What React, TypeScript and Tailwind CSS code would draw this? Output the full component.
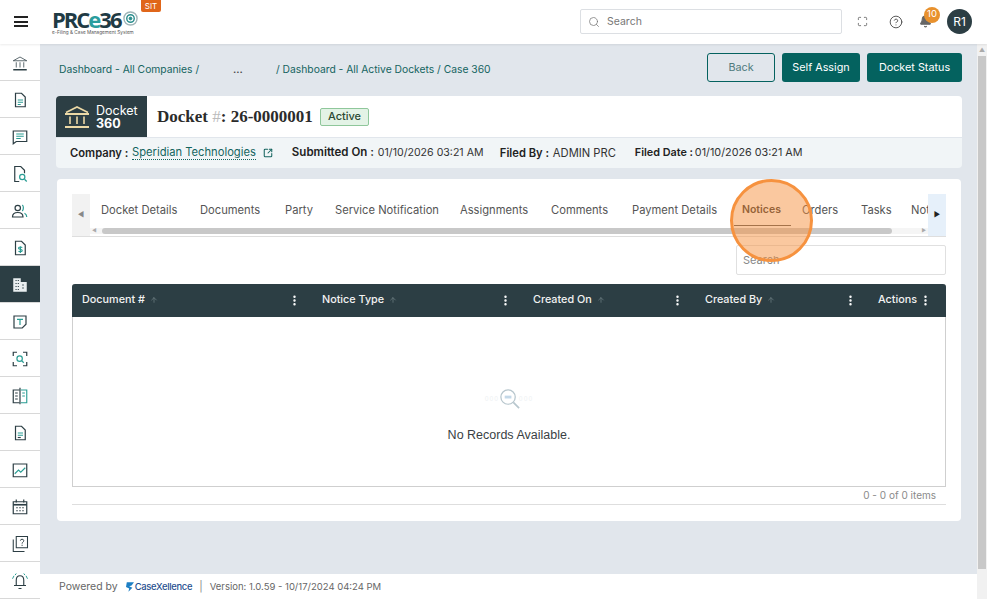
import { Search, Maximize, CircleHelp, Bell, ArrowUp, SquareArrowOutUpRight, EllipsisVertical } from "lucide-react";

const dark = "#2c3e44";
const teal = "#2a9d94";

const sideIcons = [
  <g key="0"><path d="M3 9 12 4l9 5H3Z" stroke={dark} /><path d="M7 11v7M12 11v7M17 11v7" stroke={dark} /><path d="M3 21h18" stroke={dark} strokeWidth="2" /></g>,
  <g key="1"><path d="M6 3h8l5 5v13H6V3Z" stroke={dark} strokeWidth="1.6" /><path d="M9 12h7M9 15h7M9 18h4" stroke={teal} strokeWidth="1.5" /></g>,
  <g key="2"><path d="M3 4h18v14H7l-4 3V4Z" stroke={dark} strokeWidth="1.6" /><path d="M7 8h10M7 11h10M7 14h6" stroke={teal} strokeWidth="1.5" /></g>,
  <g key="3"><path d="M11 22H5V2h8l5 5v4" stroke={dark} strokeWidth="1.6" /><circle cx="15" cy="16" r="3.5" stroke={teal} strokeWidth="1.6" /><path d="m18 19 3 3" stroke={teal} strokeWidth="1.6" /></g>,
  <g key="4"><circle cx="9" cy="8" r="3.6" stroke={dark} strokeWidth="1.6" /><path d="M2 20c0-4 3-6 7-6s7 2 7 6H2Z" stroke={dark} strokeWidth="1.6" /><path d="M15 4c2 1 2 6 0 8M18 15c2 1 3 3 3 5" stroke={teal} strokeWidth="1.6" /></g>,
  <g key="5"><path d="M6 3h8l5 5v13H6V3Z" stroke={dark} strokeWidth="1.6" /><path d="M15 11.5c-1-1.2-5-1.2-5 .8s5 1 5 3-4 2-5 .8M12.5 9.5v9" stroke={teal} strokeWidth="1.5" /></g>,
  <g key="6"><path d="M3 3h10v5h8v13H3V3Z" fill="#e9eef0" /><path d="M6 6h1.500M9 6h1.500M6 10h1.500M9 10h1.500M6 14h1.500M9 14h1.500M6 18h1.500M9 18h1.500M15 12h2M15 16h2" stroke={dark} strokeWidth="1.4" /></g>,
  <g key="7"><path d="M4 4h16v11l-5 5H4V4Z" stroke={dark} strokeWidth="1.6" /><path d="M8 8.500h8M12 8.500V16" stroke={teal} strokeWidth="1.6" /></g>,
  <g key="8"><path d="M3 8V3h5M16 3h5v5M21 16v5h-5M8 21H3v-5" stroke={dark} strokeWidth="1.6" /><circle cx="11.500" cy="11.500" r="3.600" stroke={teal} strokeWidth="1.6" /><path d="m14.500 14.500 2.500 2.500" stroke={teal} strokeWidth="1.6" /></g>,
  <g key="9"><path d="M11 4H3v17h8M12 1v22" stroke={dark} strokeWidth="1.6" /><path d="M13 4h8v17h-8" stroke={teal} strokeWidth="1.5" /><path d="M5.500 8H9M5.500 12H9M5.500 16H9" stroke={dark} strokeWidth="1.4" /><path d="M15 8h3.500M15 12h3.500" stroke={teal} strokeWidth="1.4" /></g>,
  <g key="10"><path d="M6 3h8l5 5v13H6V3Z" stroke={dark} strokeWidth="1.6" /><path d="M9 12h7M9 15h7" stroke={teal} strokeWidth="1.5" /><path d="M9 18h4" stroke={dark} strokeWidth="1.5" /></g>,
  <g key="11"><path d="M3 4h18v17H3V4Z" stroke={dark} strokeWidth="1.6" /><path d="m5 17 5-5 3 3 6-6" stroke={teal} strokeWidth="1.5" /></g>,
  <g key="12"><path d="M3 5h18v16H3V5Z" stroke={dark} strokeWidth="1.6" /><path d="M3 9h18" stroke={dark} strokeWidth="2.200" /><path d="M7 2v4M17 2v4" stroke={dark} strokeWidth="1.6" /><path d="M7 13h2M11 13h2M15 13h2M7 17h2M11 17h2M15 17h2" stroke={dark} strokeWidth="1.5" /></g>,
  <g key="13"><path d="M7 2h15v15H7V2Z" stroke={dark} strokeWidth="1.4" /><path d="M3 6v16h15" stroke={dark} strokeWidth="1.4" /><path d="M12.500 7.500c0-2.500 4.500-2.500 4.500 0 0 2-2.200 2-2.200 4M14.800 13v1.500" stroke={dark} strokeWidth="1.3" /></g>,
  <g key="14"><path d="M12 5c-3 0-5 2-5 6v7h10v-7c0-4-2-6-5-6Z" stroke={dark} strokeWidth="1.5" /><path d="M4 18h16M10 22h4" stroke={dark} strokeWidth="1.5" /><path d="M4 5 2 9M20 5l2 4M7 2 5.500 4M17 2l1.500 2" stroke={teal} strokeWidth="1.3" /></g>,
];

const tabs = [
  { label: "Docket Details", w: "w-[77px]" },
  { label: "Documents", w: "w-[63px]" },
  { label: "Party", w: "w-[28px]" },
  { label: "Service Notification", w: "w-[103px]" },
  { label: "Assignments", w: "w-[69px]" },
  { label: "Comments", w: "w-[59px]" },
  { label: "Payment Details", w: "w-[88px]" },
  { label: "Notices", w: "w-[38px]" },
  { label: "Orders", w: "w-[37px]" },
  { label: "Tasks", w: "w-[28px]" },
  { label: "Notes", w: "w-[17px] overflow-hidden" },
];

const columns = [
  { label: "Document #", w: "w-[240px]", sort: true },
  { label: "Notice Type", w: "w-[211px]", sort: true },
  { label: "Created On", w: "w-[172px]", sort: true },
  { label: "Created By", w: "w-[173px]", sort: true },
  { label: "Actions", w: "flex-1", sort: false },
];

function Landmark() {
  return (
    <svg viewBox="0 0 26 24" className="h-[24px] w-[26px]" fill="none" stroke="#ecd9a6">
      <path d="M2 7.500 13 2l11 5.500" strokeWidth="1.600" />
      <path d="M1 9h24" strokeWidth="1.800" />
      <path d="M6 11.500v7.500M13 11.500v7.500M20 11.500v7.500" strokeWidth="1.600" />
      <path d="M1 22h24" strokeWidth="1.800" />
    </svg>
  );
}

export default function App() {
  return (
    <div className="relative flex h-[599px] w-[987px] flex-col overflow-hidden bg-[#e1e6ec] font-['Inter',sans-serif] text-[11px] text-[#333]">
      {/* top bar */}
      <header className="z-10 flex h-[44px] shrink-0 items-center bg-white pb-[1px] shadow-[0_1px_2px_rgba(0,0,0,0.08)]">
        <div className="flex w-[41px] justify-center">
          <div className="flex w-[14px] flex-col gap-[2.500px]">
            <span className="h-[2px] bg-[#222]" />
            <span className="h-[2px] bg-[#222]" />
            <span className="h-[2px] bg-[#222]" />
          </div>
        </div>
        <div className="relative ml-[11px] w-[88px]">
          <div className="flex items-center font-['Open_Sans',sans-serif] text-[22px] leading-[20px] font-bold tracking-[-2px] text-[#1f3b45]">
            PRC<span className="text-[#2a9d9d]">e</span>36
            <svg viewBox="0 0 16 16" className="ml-[2px] h-[15px] w-[15px]" fill="none" stroke="#2a8d8d">
              <circle cx="8" cy="8" r="7" stroke="#9fb5b8" strokeWidth="1.500" />
              <circle cx="8" cy="8" r="4" strokeWidth="1.500" />
              <circle cx="8" cy="8" r="1.500" fill="#2a8d8d" />
            </svg>
          </div>
          <div className="whitespace-nowrap text-[4.700px] leading-[6px] text-[#555]">e-Filing &amp; Case Management System</div>
        </div>
        <div className="mb-[31px] ml-[1px] flex h-[12px] w-[20px] items-center justify-center rounded-b-[2px] bg-[#e0661a] text-[8px] text-white">SIT</div>
        <div className="ml-[419px] flex h-[25px] w-[262px] items-center gap-[5px] rounded-[2px] border border-[#dcdfe3] pl-[7px] text-[10.500px] text-[#777]">
          <Search size={12} strokeWidth={1.5} color="#777" />
          <span className="ml-[2px]">Search</span>
        </div>
        <Maximize size={11} className="ml-[15px]" strokeWidth={1.5} color="#444" />
        <CircleHelp size={14} className="ml-[21px]" strokeWidth={1.5} color="#444" />
        <div className="relative ml-[16px] h-[14px] w-[14px]">
          <Bell size={13} fill="#666" color="#666" />
          <span className="absolute top-[-8px] left-[5px] flex h-[16px] w-[16px] items-center justify-center rounded-full bg-[#e8912d] text-[9.500px] text-white">10</span>
        </div>
        <div className="ml-[14px] flex h-[25px] w-[25px] items-center justify-center rounded-full bg-[#2c3e44] text-[12px] text-white">R1</div>
      </header>

      <div className="flex min-h-0 flex-1">
        {/* icon rail */}
        <nav className="flex w-[40px] shrink-0 flex-col bg-white">
          {sideIcons.map((icon, i) => (
            <div key={i} className={`flex h-[37px] shrink-0 items-center justify-center border-b border-[#d8d8d8] pt-[1px] ${i === 6 ? "bg-[#2c3e44]" : ""}`}>
              <svg viewBox="0 0 24 24" className="h-[18px] w-[18px]" fill="none">{icon}</svg>
            </div>
          ))}
        </nav>

        <div className="flex min-w-0 flex-1 flex-col">
          <main className="min-h-0 flex-1 pr-[15px] pl-[16px]">
            {/* breadcrumb and actions */}
            <div className="flex h-[52px] items-start pt-[9px] text-[10.300px] text-[#14645f]">
              <div className="flex h-[29px] items-center pt-[5px]">
                <span className="ml-[3px] w-[142px] whitespace-nowrap">Dashboard - All Companies /</span>
                <span className="ml-[32px] w-[43px] font-semibold text-[#444]">...</span>
                <span className="whitespace-nowrap">/ Dashboard - All Active Dockets / Case 360</span>
              </div>
              <div className="ml-auto flex gap-[7px] text-[10.800px]">
                <button className="h-[29px] w-[68px] rounded-[3px] border border-[#04625f] pt-[1px] text-[#4f7a7d]">Back</button>
                <button className="h-[29px] w-[78px] rounded-[3px] bg-[#04625f] pt-[1px] text-white">Self Assign</button>
                <button className="h-[29px] w-[95px] rounded-[3px] bg-[#04625f] pt-[1px] text-white">Docket Status</button>
              </div>
            </div>

            {/* docket summary */}
            <section className="overflow-hidden rounded-[4px]">
              <div className="flex h-[41px] items-center bg-white">
                <div className="flex h-full w-[91px] items-center gap-[6px] bg-[#2c3e44] pl-[8px] text-white">
                  <Landmark />
                  <div className="text-[12.500px] leading-[13px]">
                    Docket
                    <div className="font-bold">360</div>
                  </div>
                </div>
                <h1 className="ml-[10px] w-[154px] font-['Liberation_Serif',serif] text-[17px] font-bold whitespace-nowrap text-[#2b2b2b]">
                  Docket <span className="font-normal text-[#bbb]">#</span>: 26-0000001
                </h1>
                <span className="ml-[9px] flex h-[18px] w-[49px] items-center justify-center rounded-[2px] border border-[#8fc79b] bg-[#e3f3e6] pb-[1px] text-[11px] font-medium text-[#2b4a33]">Active</span>
              </div>
              <div className="mt-[1px] flex h-[30px] items-center bg-[#f1f5f7] pl-[14px] whitespace-nowrap">
                <b className="w-[62px] shrink-0 text-[11.200px] font-semibold text-[#222]">Company :</b>
                <span className="border-b border-dotted border-[#14645f] text-[11.200px] leading-[13px] text-[#14645f]">Speridian Technologies</span>
                <SquareArrowOutUpRight size={10} strokeWidth={2.500} color="#14645f" className="ml-[7px] shrink-0" />
                <b className="ml-[19px] w-[86px] shrink-0 text-[11.500px] font-semibold text-[#222]">Submitted On :</b>
                <span className="w-[122px] shrink-0 text-[10.600px]">01/10/2026 03:21 AM</span>
                <b className="w-[53px] shrink-0 text-[11.200px] font-semibold text-[#222]">Filed By :</b>
                <span className="w-[82px] shrink-0 text-[11.200px]">ADMIN PRC</span>
                <b className="w-[60px] shrink-0 text-[10.800px] font-semibold text-[#222]">Filed Date :</b>
                <span className="text-[10.800px]">01/10/2026 03:21 AM</span>
              </div>
            </section>

            {/* tabs card */}
            <section className="mt-[11px] mr-[1px] ml-[1px] h-[342px] rounded-[4px] bg-white px-[15px] pt-[15px]">
              <div className="relative h-[43px] overflow-hidden border-b border-[#dedede]">
                <div className="flex h-[33px] items-center pl-[29px] text-[11.200px] whitespace-nowrap text-[#555]">
                  <div className="flex gap-[22px]">
                    {tabs.map((t) => (
                      <span key={t.label} className={`${t.w} shrink-0 ${t.label === "Notices" ? "text-[10.500px] font-semibold text-[#333]" : ""}`}>{t.label}</span>
                    ))}
                  </div>
                </div>
                <div className="absolute top-0 left-0 flex h-[42px] w-[18px] items-center justify-center bg-[#f2f2f2] text-[7px] text-[#888]">◀</div>
                <div className="absolute top-0 right-0 flex h-[42px] w-[18px] items-center justify-center bg-[#e6f0fa] text-[7px] text-[#222]">▶</div>
                <div className="absolute right-[18px] bottom-[2px] left-[18px] flex h-[6px] items-center bg-[#f5f5f5]">
                  <span className="ml-[2px] text-[5px] text-[#aaa]">◀</span>
                  <span className="ml-[5px] h-[6px] w-[790px] rounded-full bg-[#c8c8c8]" />
                  <span className="ml-auto mr-[2px] text-[5px] text-[#aaa]">▶</span>
                </div>
                <span className="absolute top-[31px] left-[662px] h-px w-[57px] bg-[#555]" />
              </div>

              <div className="mt-[8px] flex justify-end">
                <div className="flex h-[30px] w-[210px] items-center rounded-[2px] border border-[#e0e0e0] pl-[6px] text-[11px] text-[#888]">Search</div>
              </div>

              <div className="mt-[9px] h-[203px] rounded-t-[3px] border border-t-0 border-[#cfcfcf]">
                <div className="mx-[-1px] flex h-[33px] items-center rounded-t-[3px] bg-[#2c3e44] pb-[1px] text-[10.800px] font-medium text-[#f2f2f2]">
                  {columns.map((c, i) => (
                    <div key={c.label} className={`${c.w} flex items-center pl-[10px] ${i === 4 ? "pr-[14px]" : "pr-[11px]"}`}>
                      <span>{c.label}</span>
                      {c.sort && <ArrowUp size={8} className="ml-[5px]" color="#74858a" />}
                      <EllipsisVertical size={13} strokeWidth={2.500} color="#fff" className="ml-auto" />
                    </div>
                  ))}
                </div>
                <div className="flex h-[169px] flex-col items-center pt-[69px]">
                  <div className="relative flex h-[24px] w-[60px] items-center justify-center">
                    <span className="absolute text-[6px] tracking-[1px] text-[#eef1f3]">000 000 000</span>
                    <svg viewBox="0 0 24 24" className="relative h-[23px] w-[23px]" fill="none" stroke="#b7c6cd">
                      <circle cx="10.500" cy="10.500" r="7.500" strokeWidth="1.300" fill="#ffffff" />
                      <path d="m16 16 6 6" strokeWidth="1.800" />
                      <path d="M7 10.500h7" stroke="#c4d8e8" strokeWidth="3" />
                    </svg>
                  </div>
                  <p className="mt-[16px] font-['Liberation_Sans',sans-serif] text-[12.500px] text-[#3a3f44]">No Records Available.</p>
                </div>
              </div>

              <div className="flex h-[18px] items-center justify-end border-b border-[#dedede] pr-[10px] text-[10px] text-[#8a8a8a]">0 - 0 of 0 items</div>
            </section>
          </main>

          {/* footer */}
          <footer className="flex h-[25px] shrink-0 items-center bg-white pt-[1px] pl-[19px] text-[10.500px] whitespace-nowrap text-[#666]">
            <span>Powered by</span>
            <span className="ml-[8px] flex items-center text-[#1f4f8f]">
              <svg viewBox="0 0 10 12" className="mr-[1px] h-[12px] w-[8px]" fill="#1d7fc4">
                <path d="M1 0h9L7 4l-3 1 4 2-5 5 1-4-4-2 1-6Z" />
              </svg>
              <span className="text-[9.400px] font-medium tracking-[-0.3px]">CaseXellence</span>
            </span>
            <span className="ml-[7px] text-[#888]">|</span>
            <span className="ml-[7px] text-[9.500px]">Version: 1.0.59 - 10/17/2024 04:24 PM</span>
          </footer>
        </div>

        {/* page scrollbar */}
        <div className="flex w-[10px] shrink-0 flex-col items-center bg-[#f1f1f1] pt-[3px]">
          <span className="text-[6px] leading-[6px] text-[#aaa]">▲</span>
          <span className="mt-[3px] h-[513px] w-[8px] bg-[#c8c8c8]" />
        </div>
      </div>

      {/* click highlight */}
      <div className="absolute top-[179px] left-[730px] h-[83px] w-[83px] rounded-full border-[3px] border-[#f6923f] bg-[#f6923f]/50" />
    </div>
  );
}
